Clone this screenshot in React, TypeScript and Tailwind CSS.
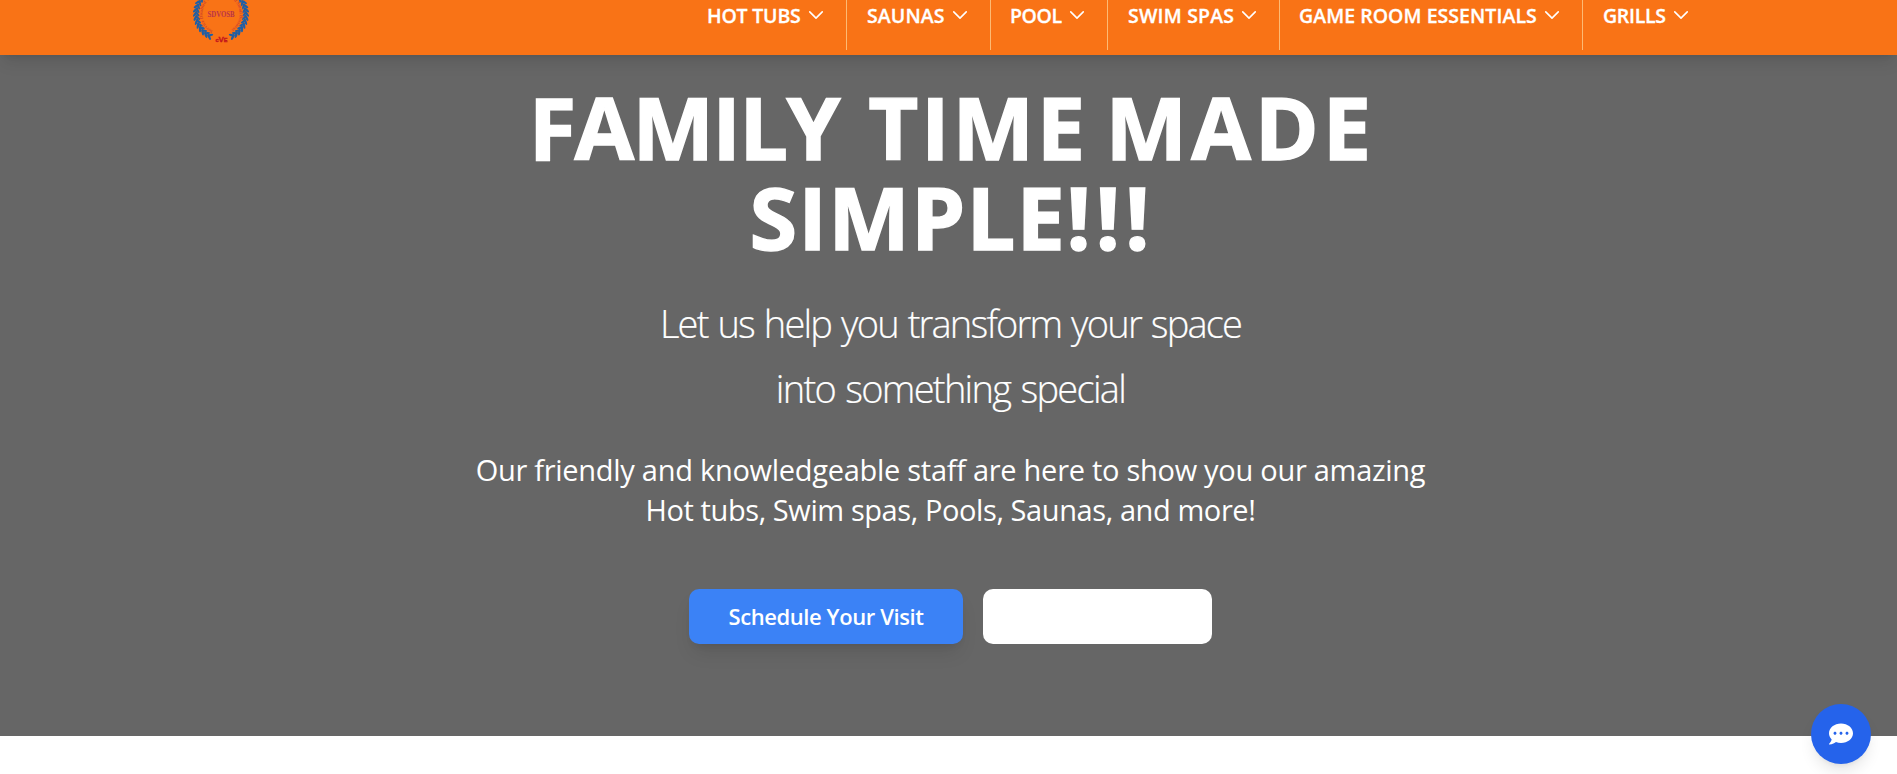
import { FaCommentDots } from "react-icons/fa";

const NAV = [
  { label: "HOT TUBS", box: "w-[160px] border-r", text: "tracking-[-0.2px]" },
  { label: "SAUNAS", box: "w-[144px] border-r", text: "tracking-[0.1px]" },
  { label: "POOL", box: "w-[117px] border-r", text: "tracking-[-0.4px] -ml-px" },
  { label: "SWIM SPAS", box: "w-[172px] border-r", text: "tracking-[0.2px]" },
  { label: "GAME ROOM ESSENTIALS", box: "w-[303px] border-r", text: "tracking-[0.05px] -ml-px" },
  { label: "GRILLS", box: "w-[128px]", text: "tracking-[-0.3px]" },
];

const LEAVES = Array.from({ length: 15 }, (_, i) => 24 + i * 9);

function Chevron() {
  return (
    <svg
      className="h-5 w-5 shrink-0"
      viewBox="0 0 24 24"
      fill="none"
      stroke="currentColor"
      strokeWidth="1.9"
      strokeLinecap="round"
      strokeLinejoin="round"
    >
      <path d="M19.5 8.25l-7.5 7.5-7.5-7.5" />
    </svg>
  );
}

function Laurel() {
  return (
    <g>
      {LEAVES.map((a) => (
        <g key={a} transform={`rotate(${a}) translate(0 24.6)`} fill="#1f5fa5">
          <ellipse cx="-0.4" cy="1.8" rx="3.3" ry="1.2" transform="rotate(40)" />
          <ellipse cx="-0.4" cy="-1.5" rx="3" ry="1.1" transform="rotate(-36)" />
        </g>
      ))}
    </g>
  );
}

function Logo() {
  return (
    <svg className="h-[60px] w-[60px] shrink-0" viewBox="-30 -30 60 60">
      <defs>
        <path id="seal-ring" d="M-8 16.8A18.6 18.6 0 1 1 8 16.8" />
      </defs>
      <Laurel />
      <g transform="scale(-1 1)">
        <Laurel />
      </g>
      <text fontFamily="Liberation Serif, serif" fontSize="4.8" fontWeight="700" fill="#d2452a">
        <textPath href="#seal-ring" textLength="97" lengthAdjust="spacing">
          Service Disabled Veteran Owned Small Business
        </textPath>
      </text>
      <text
        x="0"
        y="2.8"
        textAnchor="middle"
        textLength="27"
        lengthAdjust="spacingAndGlyphs"
        fontFamily="Liberation Serif, serif"
        fontSize="7.6"
        fontWeight="700"
        fill="#b8324a"
      >
        SDVOSB
      </text>
      <text
        x="0.5"
        y="27.6"
        textAnchor="middle"
        fontFamily="Liberation Sans, sans-serif"
        fontSize="5.6"
        fontWeight="700"
        fill="#c4161c"
        stroke="#c4161c"
        strokeWidth="0.4"
      >
        c<tspan fontSize="8">V</tspan>E
      </text>
    </svg>
  );
}

export default function App() {
  return (
    <div className="flex h-[774px] flex-col overflow-hidden bg-white font-['Open_Sans','Noto_Sans',sans-serif] text-white">
      <header className="z-10 flex h-[55px] shrink-0 items-start bg-[#f97316] pl-[191px] shadow-[0_10px_15px_-3px_rgba(0,0,0,0.1),0_4px_6px_-4px_rgba(0,0,0,0.1)]">
        <div className="-mt-4">
          <Logo />
        </div>
        <nav className="ml-[436px] flex h-[50px]">
          {NAV.map((item) => (
            <a
              key={item.label}
              className={`flex items-start justify-between border-[#fdba74] pr-5 pl-5 ${item.box}`}
            >
              <span
                className={`whitespace-nowrap text-[19.5px] leading-8 font-semibold [-webkit-text-stroke:0.3px_white] ${item.text}`}
              >
                {item.label}
              </span>
              <span className="pt-[5px]">
                <Chevron />
              </span>
            </a>
          ))}
        </nav>
      </header>

      <main className="flex h-[681px] shrink-0 flex-col items-center bg-[#666666] pt-[27px] pl-1 text-center">
        <h1 className="text-[86.5px] leading-[90px] font-bold [-webkit-text-stroke:1.4px_white]">
          <span className="block pl-[3px]">
            <span className="mr-[7px] tracking-[-1.7px]">FAMILY</span>{" "}
            <span className="-mr-[5px] tracking-[2.8px]">TIME</span>{" "}
            <span className="tracking-[4px]">MADE</span>
          </span>
          <span className="block pl-[3px]">
            <span className="tracking-[1.2px]">SIMPLE</span>
            <span className="tracking-[4.7px]">!!!</span>
          </span>
        </h1>
        <p className="mt-[29px] text-[38px] leading-[65px] font-light [-webkit-text-stroke:0.2px_white]">
          <span className="block tracking-[-1.8px] [word-spacing:1.8px]">
            Let us help you transform your space
          </span>
          <span className="block tracking-[-1.7px] [word-spacing:2px]">
            into something special
          </span>
        </p>
        <p className="mt-[29px] text-[29px] leading-10">
          <span className="block tracking-[-0.28px]">
            Our friendly and knowledgeable staff are here to show you our amazing
          </span>
          <span className="block tracking-[-0.41px]">
            Hot tubs, Swim spas, Pools, Saunas, and more!
          </span>
        </p>
        <div className="mt-[59px] flex gap-5">
          <button className="h-[55px] w-[274px] rounded-[10px] bg-[#3b82f6] text-[22px] leading-[55px] font-semibold tracking-[-0.42px] whitespace-nowrap shadow-[0_12px_19px_-4px_rgba(0,0,0,0.1),0_5px_8px_-5px_rgba(0,0,0,0.1)]">
            Schedule Your Visit
          </button>
          <button className="h-[55px] w-[229px] rounded-[10px] bg-white" />
        </div>
      </main>

      <button className="fixed right-[26px] bottom-[10px] z-20 flex h-[60px] w-[60px] items-center justify-center rounded-full bg-[#2563eb] shadow-[0_10px_15px_-3px_rgba(0,0,0,0.1),0_4px_6px_-4px_rgba(0,0,0,0.1)]">
        <FaCommentDots className="h-6 w-6" />
      </button>
    </div>
  );
}
